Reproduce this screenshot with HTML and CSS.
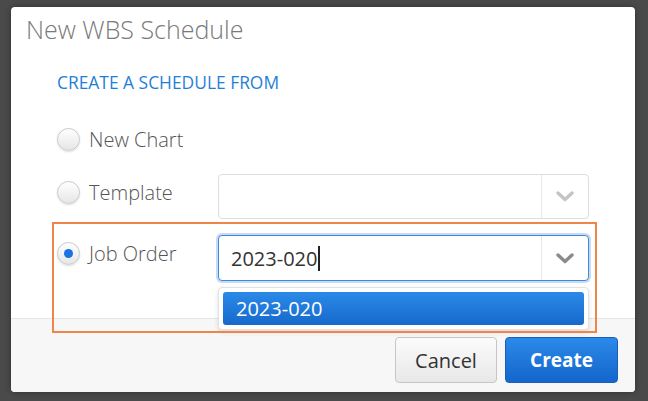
FILE: index.html
```html
<!DOCTYPE html>
<html lang="en">
<head>
<meta charset="utf-8">
<title>New WBS Schedule</title>
<link rel="stylesheet" href="styles.css">
</head>
<body>
<div class="dialog">
  <div class="header"><h1 class="title">New WBS Schedule</h1></div>
  <div class="content">
    <h2 class="section">CREATE A SCHEDULE FROM</h2>
    <div class="row row-first">
      <label class="opt"><span class="radio"></span><span class="opt-text">New Chart</span></label>
    </div>
    <div class="row">
      <label class="opt"><span class="radio"></span><span class="opt-text">Template</span></label>
      <div class="select">
        <div class="select-value"></div>
        <div class="select-btn">
          <svg class="chev" width="18" height="11" viewBox="0 0 18 11"><polyline points="2,2 9,8.5 16,2" fill="none" stroke="#c4c4c4" stroke-width="3.4" stroke-linecap="round" stroke-linejoin="round"/></svg>
        </div>
      </div>
    </div>
    <div class="row row-job">
      <label class="opt"><span class="radio checked"></span><span class="opt-text">Job Order</span></label>
      <div class="combo">
        <div class="select focus">
          <div class="select-value"><span class="typed">2023-020</span><span class="caret"></span></div>
          <div class="select-btn">
            <svg class="chev" width="18" height="11" viewBox="0 0 18 11"><polyline points="2,2 9,8.5 16,2" fill="none" stroke="#8a8a8a" stroke-width="3.4" stroke-linecap="round" stroke-linejoin="round"/></svg>
          </div>
        </div>
        <ul class="menu"><li class="menu-item active">2023-020</li></ul>
      </div>
    </div>
  </div>
  <div class="footer">
    <button class="btn btn-cancel">Cancel</button>
    <button class="btn btn-primary">Create</button>
  </div>
  <div class="highlight"></div>
</div>
</body>
</html>
```
FILE: styles.css
```css
html, body {
  margin: 0;
  padding: 0;
}
body {
  background: #4a4a4a;
  width: 648px;
  height: 401px;
  overflow: hidden;
  font-family: "Open Sans", "Noto Sans", sans-serif;
}
.dialog {
  position: relative;
  width: 624px;
  height: 385px;
  margin: 7px 0 0 11px;
  background: #fff;
  border-radius: 4px;
  display: flex;
  flex-direction: column;
  box-shadow: 0 0 6px rgba(0,0,0,0.35);
}
.header {
  padding: 6px 15px 0;
}
.title {
  margin: 0;
  font-size: 25px;
  font-weight: 300;
  line-height: 32px;
  color: #7a7a7a;
}
.content {
  flex: 1;
  padding-left: 46px;
}
.section {
  margin: 26px 0 0;
  font-size: 17.4px;
  font-weight: 400;
  line-height: 22px;
  color: #1f7fd8;
}
.row {
  display: flex;
  align-items: flex-start;
  height: 45px;
  margin-top: 8px;
}
.row-first {
  margin-top: 28px;
}
.row-job {
  margin-top: 16px;
}
.opt {
  width: 161px;
  flex: none;
  display: flex;
  align-items: flex-start;
  gap: 9px;
  padding-top: 8px;
}
.radio {
  width: 21px;
  height: 21px;
  border: 1px solid #c9c9c9;
  border-radius: 50%;
  background: linear-gradient(#ffffff, #e6e6e6);
  box-shadow: 0 1px 2px rgba(0,0,0,0.12);
  flex: none;
  display: flex;
  align-items: center;
  justify-content: center;
  box-sizing: content-box;
  margin-top: -1px;
}
.radio.checked::after {
  content: "";
  width: 9px;
  height: 9px;
  border-radius: 50%;
  background: #1a73e0;
}
.opt-text {
  font-size: 20px;
  font-weight: 300;
  line-height: 22px;
  color: #555;
}
.combo {
  position: relative;
}
.select {
  width: 371px;
  height: 45px;
  box-sizing: border-box;
  border: 1px solid #dedede;
  border-radius: 4px;
  display: flex;
  background: #fff;
}
.select.focus {
  height: 46px;
  border-color: #3f88d6;
  box-shadow: 0 0 0 2px rgba(90,155,225,0.35);
}
.select-value {
  flex: 1;
  padding-left: 12px;
  display: flex;
  align-items: center;
  font-size: 20px;
  color: #333;
}
.caret {
  width: 2px;
  height: 25px;
  background: #222;
  margin-left: 1px;
}
.select-btn {
  width: 46px;
  border-left: 1px solid #e8e8e8;
  display: flex;
  align-items: center;
  justify-content: center;
}
.menu {
  position: absolute;
  top: 52px;
  left: 0;
  width: 371px;
  box-sizing: border-box;
  margin: 0;
  padding: 4px;
  list-style: none;
  background: #fff;
  border: 1px solid #e2e2e2;
  border-radius: 4px;
  box-shadow: 0 2px 5px rgba(0,0,0,0.12);
  z-index: 2;
}
.menu-item {
  height: 33px;
  line-height: 33px;
  padding-left: 13px;
  border-radius: 3px;
  font-size: 20px;
  color: #fff;
  background: linear-gradient(#2b8ae8, #1669cb);
}
.footer {
  height: 74px;
  box-sizing: border-box;
  border-top: 1px solid #e4e4e4;
  background: #f7f7f7;
  border-radius: 0 0 4px 4px;
  display: flex;
  justify-content: flex-end;
  align-items: flex-start;
  gap: 8px;
  padding: 18px 17px 0 0;
}
.btn {
  height: 46px;
  border-radius: 4px;
  font-family: "Open Sans", "Noto Sans", sans-serif;
  font-size: 20px;
  padding: 0;
}
.btn-cancel {
  width: 102px;
  border: 1px solid #c6c6c6;
  background: linear-gradient(#fbfbfb, #e8e8e8);
  color: #333;
}
.btn-primary {
  width: 113px;
  border: 1px solid #1a5fb5;
  background: linear-gradient(#2a8ae9, #1565cc);
  color: #fff;
  font-weight: 700;
  font-size: 19px;
}
.highlight {
  position: absolute;
  left: 41px;
  top: 215px;
  width: 545px;
  height: 111px;
  box-sizing: border-box;
  border: 2px solid #ef8546;
  z-index: 3;
  pointer-events: none;
}
```
